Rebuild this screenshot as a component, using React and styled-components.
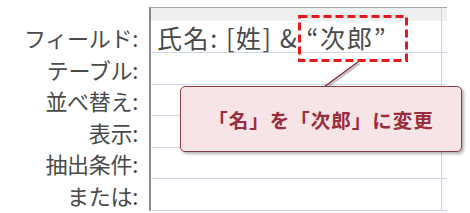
import React from 'react'
import styled, { createGlobalStyle } from 'styled-components'

const GlobalStyle = createGlobalStyle`
  html, body {
    margin: 0;
    padding: 0;
    background: #ffffff;
  }
  body {
    width: 470px;
    height: 213px;
    overflow: hidden;
    font-family: "Noto Sans CJK JP", "Noto Sans", sans-serif;
  }
`

const labels = ['フィールド:', 'テーブル:', '並べ替え:', '表示:', '抽出条件:', 'または:']

export default function App() {
  return (
    <>
      <GlobalStyle />
      <Page>
        <Row>
          <Label />
          <HeaderCell>
            <MainCol $header />
            <SideCol $header />
          </HeaderCell>
        </Row>
        {labels.map((l, i) => (
          <Row key={l} $h={i === 0 ? 32 : 31.5}>
            <Label>{l}</Label>
            <Cell>
              <MainCol>
                {i === 0 && (
                  <FieldText>
                    氏名: [姓] &amp;<Quoted>“次郎”</Quoted>
                  </FieldText>
                )}
              </MainCol>
              <SideCol />
            </Cell>
          </Row>
        ))}

        <Marks width="470" height="213" viewBox="0 0 470 213">
          <rect x="299.5" y="16.5" width="107" height="44" fill="none"
            stroke="#e3191c" strokeWidth="3" strokeDasharray="8 4" />
          <line x1="324" y1="87" x2="358" y2="62" stroke="rgba(0,0,0,0.25)" strokeWidth="2" transform="translate(1.5 1.5)" />
          <line x1="324" y1="87" x2="358" y2="62" stroke="#7c2a36" strokeWidth="1.5" />
        </Marks>

        <Callout>「名」を「次郎」に変更</Callout>
      </Page>
    </>
  )
}

const Page = styled.div`
  position: relative;
  width: 470px;
  height: 213px;
  padding-top: 7px;
  box-sizing: border-box;
`

const Row = styled.div`
  display: flex;
  height: ${p => (p.$h ? `${p.$h}px` : '14px')};
`

const Label = styled.div`
  width: 149px;
  box-sizing: border-box;
  padding-right: 11px;
  display: flex;
  align-items: center;
  justify-content: flex-end;
  font-size: 22px;
  line-height: 1;
  color: #4a4a4a;
  letter-spacing: -0.3px;
  white-space: nowrap;
`

const HeaderCell = styled.div`
  display: flex;
  width: 298px;
  box-sizing: border-box;
  border-top: 1px solid #a8a8a8;
  border-left: 2px solid #8a8a8a;
  background: #efefef;
`

const Cell = styled.div`
  display: flex;
  width: 298px;
  box-sizing: border-box;
  border-left: 2px solid #8a8a8a;
  border-bottom: 1px solid #cdd7e6;
`

const MainCol = styled.div`
  width: 291px;
  display: flex;
  align-items: center;
  padding-left: 6px;
  box-sizing: border-box;
  border-right: 1px solid ${p => (p.$header ? '#d4d4d4' : '#cbd3df')};
`

const SideCol = styled.div`
  flex: 1;
`

const FieldText = styled.span`
  font-size: 25px;
  line-height: 1;
  color: #4a4a4a;
  letter-spacing: 1.6px;
  white-space: nowrap;
  margin-top: 2px;
`

const Quoted = styled.span`
  margin-left: 8px;
  letter-spacing: 1.8px;
`

const Marks = styled.svg`
  position: absolute;
  left: 0;
  top: 0;
  pointer-events: none;
`

const Callout = styled.div`
  position: absolute;
  left: 180px;
  top: 86px;
  width: 282px;
  height: 66px;
  box-sizing: border-box;
  display: flex;
  align-items: center;
  justify-content: center;
  background: #f6e4e7;
  border: 1px solid #8c3a46;
  border-radius: 5px;
  box-shadow: 2px 2px 3px rgba(0, 0, 0, 0.3);
  font-size: 19.5px;
  font-weight: 700;
  letter-spacing: 1px;
  color: #9a2d3b;
  white-space: nowrap;
`
